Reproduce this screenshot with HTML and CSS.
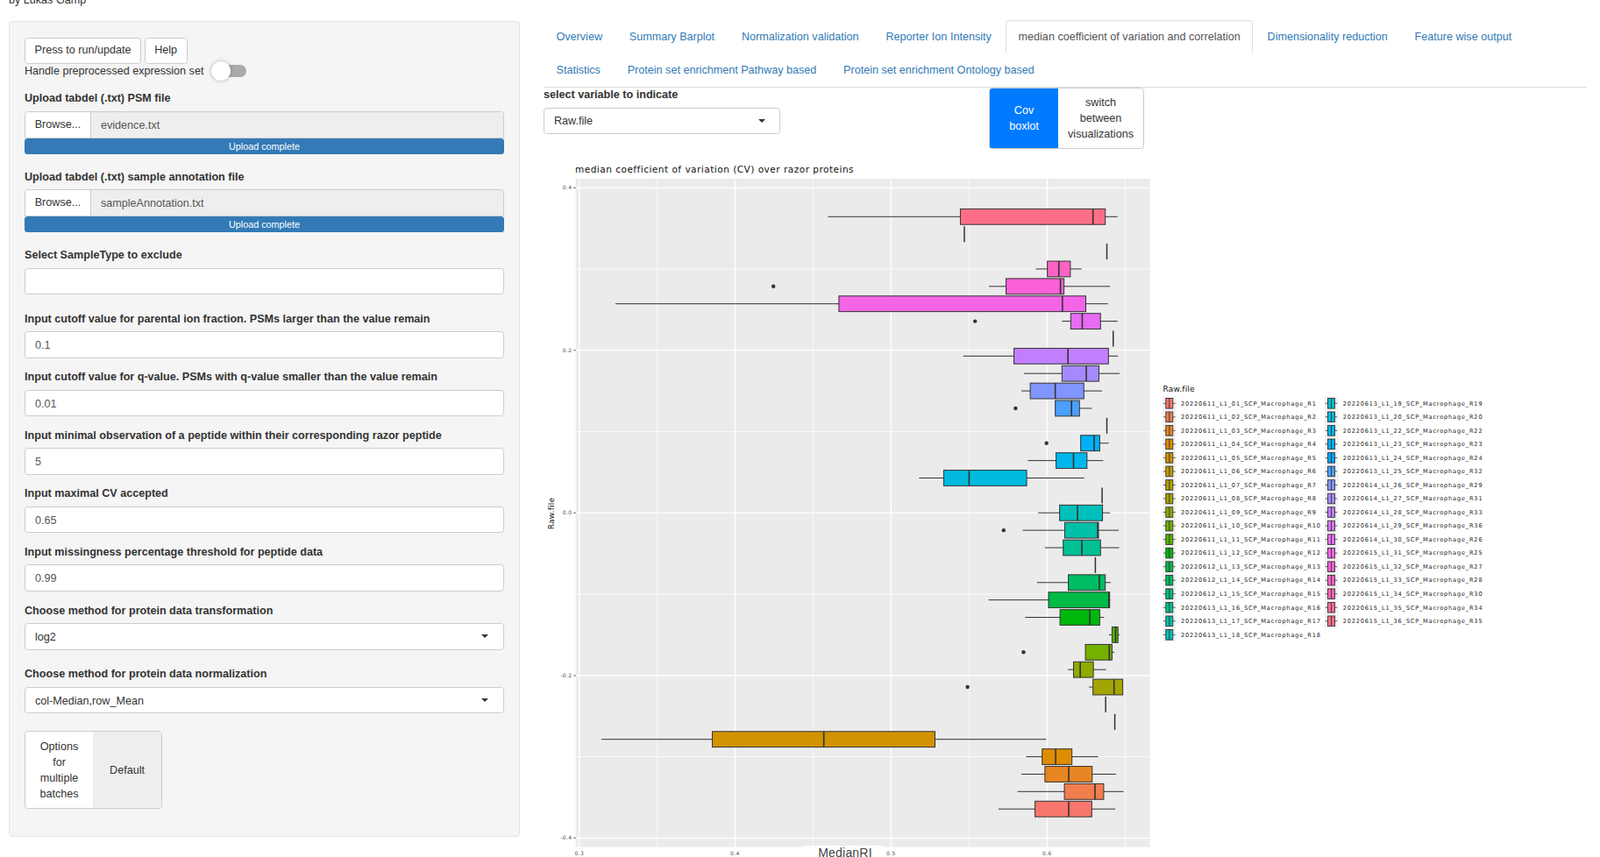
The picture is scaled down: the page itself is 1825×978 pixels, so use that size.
FILE: index.html
```html
<!DOCTYPE html>
<html lang="en">
<head>
    <meta charset="UTF-8">
    <meta name="viewport" content="width=device-width, initial-scale=1.0">
    <title>Proteomics QC</title>
    <link rel="stylesheet" href="styles.css">
</head>
<body>
    <div class="byline">by Lukas Gamp</div>
    <div class="layout">
        <aside class="well">
            <div class="btn-row">
                <button class="btn">Press to run/update</button>
                <button class="btn">Help</button>
            </div>
            <div class="switch-row">
                <span>Handle preprocessed expression set</span>
                <span class="switch"><span class="switch-knob"></span></span>
            </div>

            <div class="upload">
                <label>Upload tabdel (.txt) PSM file</label>
                <div class="file-input">
                    <span class="file-btn">Browse...</span>
                    <span class="file-name">evidence.txt</span>
                </div>
                <div class="progress">Upload complete</div>
            </div>
            <div class="upload">
                <label>Upload tabdel (.txt) sample annotation file</label>
                <div class="file-input">
                    <span class="file-btn">Browse...</span>
                    <span class="file-name">sampleAnnotation.txt</span>
                </div>
                <div class="progress">Upload complete</div>
            </div>

            <div class="form-group form-group-select">
                <label>Select SampleType to exclude</label>
                <div class="field"></div>
            </div>
            <div class="form-group">
                <label>Input cutoff value for parental ion fraction. PSMs larger than the value remain</label>
                <div class="field">0.1</div>
            </div>
            <div class="form-group">
                <label>Input cutoff value for q-value. PSMs with q-value smaller than the value remain</label>
                <div class="field">0.01</div>
            </div>
            <div class="form-group">
                <label>Input minimal observation of a peptide within their corresponding razor peptide</label>
                <div class="field">5</div>
            </div>
            <div class="form-group">
                <label>Input maximal CV accepted</label>
                <div class="field">0.65</div>
            </div>
            <div class="form-group">
                <label>Input missingness percentage threshold for peptide data</label>
                <div class="field">0.99</div>
            </div>
            <div class="form-group form-group-select">
                <label>Choose method for protein data transformation</label>
                <div class="field field-select"><span>log2</span><i class="caret"></i></div>
            </div>
            <div class="form-group form-group-select">
                <label>Choose method for protein data normalization</label>
                <div class="field field-select"><span>col-Median,row_Mean</span><i class="caret"></i></div>
            </div>

            <div class="toggle toggle-batches">
                <div class="toggle-cell toggle-narrow">Options for multiple batches</div>
                <div class="toggle-cell toggle-muted">Default</div>
            </div>
        </aside>

        <main class="main">
            <ul class="tabs">
                <li><a>Overview</a></li>
                <li><a>Summary Barplot</a></li>
                <li><a>Normalization validation</a></li>
                <li><a>Reporter Ion Intensity</a></li>
                <li class="active"><a>median coefficient of variation and correlation</a></li>
                <li><a>Dimensionality reduction</a></li>
                <li><a>Feature wise output</a></li>
                <li><a>Statistics</a></li>
                <li><a>Protein set enrichment Pathway based</a></li>
                <li><a>Protein set enrichment Ontology based</a></li>
            </ul>
            <div class="controls">
                <div class="variable">
                    <label>select variable to indicate</label>
                    <div class="field field-select field-dark"><span>Raw.file</span><i class="caret"></i></div>
                </div>
                <div class="toggle toggle-plot">
                    <div class="toggle-cell toggle-narrow toggle-on">Cov boxlot</div>
                    <div class="toggle-cell">switch between visualizations</div>
                </div>
            </div>
            <svg id="plot" class="plot" viewBox="620 180 1100 810" width="1100" height="810"></svg>
        </main>
    </div>
    <script src="plot.js"></script>
</body>
</html>
```

FILE: styles.css
```css
html, body {
    height: 100%;
    overflow: hidden;
}
body {
    font-family: "Liberation Sans", Arial, sans-serif;
    font-size: 12.6px;
    line-height: 18px;
    color: #333;
    background: white;
    margin: 0;
}
label {
    display: block;
    font-weight: bold;
    line-height: 17px;
    margin-bottom: 5.5px;
}
.byline {
    margin: -9px 0 0 10px;
    height: 33px;
}
.layout {
    display: flex;
    align-items: flex-start;
    padding: 0 15px 0 10px;
}
.well {
    box-sizing: border-box;
    width: 583px;
    flex: none;
    margin-right: 27px;
    padding: 18px 17px 17px;
    background-color: #f5f5f5;
    border: 1px solid #e3e3e3;
    border-radius: 3.6px;
    height: 931px;
}
.btn-row {
    display: flex;
    gap: 3.5px;
}
.btn {
    font: inherit;
    color: #333;
    background: white;
    border: 1px solid #ccc;
    border-radius: 3.6px;
    padding: 3.6px 10.6px 5.2px;
    height: 30px;
    line-height: 18px;
}
.switch-row {
    display: flex;
    align-items: center;
    height: 18px;
    margin: -1px 0 14px;
}
.switch {
    position: relative;
    width: 37px;
    height: 14px;
    margin-left: 12px;
    background: #aaa;
    border-radius: 7px;
}
.switch-knob {
    position: absolute;
    left: -3px;
    top: -4px;
    width: 22px;
    height: 22px;
    background: white;
    border-radius: 50%;
    box-shadow: 0 0 4px rgba(0, 0, 0, 0.3);
}
.upload {
    margin-bottom: 18px;
}
.file-input {
    box-sizing: border-box;
    display: flex;
    height: 31px;
    border: 1px solid #ccc;
    border-radius: 3.6px 3.6px 0 0;
    overflow: hidden;
}
.file-btn {
    width: 75px;
    flex: none;
    box-sizing: border-box;
    padding: 5px 0 0 10.7px;
    background: white;
    border-right: 1px solid #ccc;
}
.file-name {
    flex: 1;
    padding: 6px 11px;
    background: #eee;
    color: #555;
}
.progress {
    height: 18px;
    background-color: #337ab7;
    color: white;
    font-size: 10.8px;
    line-height: 18px;
    text-align: center;
    border-radius: 3.6px;
}
.form-group {
    margin-bottom: 13.5px;
}
.form-group-select {
    margin-bottom: 19.5px;
}
.field {
    box-sizing: border-box;
    height: 30.6px;
    padding: 6px 11px;
    background: white;
    border: 1px solid #ccc;
    border-radius: 3.6px;
    color: #555;
}
.field-select {
    display: flex;
    align-items: center;
    justify-content: space-between;
    color: #333;
    padding: 5.4px 17px 5.4px 11px;
}
.form-group .field-select span {
    padding-top: 2px;
}
.field-dark {
    padding-right: 16px;
}
.caret {
    width: 0;
    height: 0;
    border-style: solid;
    border-width: 4.5px 4.5px 0;
    border-color: #333 transparent transparent;
}
.toggle {
    box-sizing: border-box;
    display: grid;
    border: 1px solid #ccc;
    border-radius: 3.6px;
    overflow: hidden;
    text-align: center;
    background: white;
}
.toggle-batches {
    grid-template-columns: 77px 78px;
    width: 157px;
    height: 89px;
}
.toggle-batches .toggle-cell {
    padding-top: 2px;
}
.toggle-plot {
    grid-template-columns: 78px 97px;
    width: 177px;
    height: 70px;
}
.toggle-cell {
    display: flex;
    align-items: center;
    justify-content: center;
    padding: 0 8px;
}
.toggle-narrow {
    padding: 0 14px;
}
.toggle-muted {
    background: #eee;
    color: #333;
}
.toggle-on {
    background: #007bff;
    color: white;
}
.main {
    flex: 1;
    min-width: 0;
    margin-top: -1px;
}
.tabs {
    display: flex;
    flex-wrap: wrap;
    list-style: none;
    margin: 0;
    padding: 0;
    border-bottom: 1px solid #ddd;
}
.tabs li {
    margin-right: 1.8px;
}
.tabs a {
    display: block;
    height: 37.8px;
    box-sizing: border-box;
    padding: 9px 13.5px;
    border: 1px solid transparent;
    color: #337ab7;
}
.tabs .active a {
    color: #555;
    background: white;
    border-color: #ddd #ddd transparent;
    border-radius: 3.6px 3.6px 0 0;
}
.controls {
    display: flex;
    align-items: flex-start;
    margin-top: 0.5px;
}
.variable {
    width: 270px;
    margin-right: 238px;
}
.plot {
    display: block;
    margin-top: 10px;
}
.plot text {
    font-family: "DejaVu Sans", sans-serif;
}
.plot .plot-title {
    font-size: 10.5px;
    letter-spacing: 0.5px;
    fill: #111;
}
.plot .tick {
    font-size: 6px;
    letter-spacing: 0.4px;
    fill: #4d4d4d;
}
.plot .axis-title {
    font-size: 9px;
    letter-spacing: 0.2px;
    fill: #111;
}
.plot .legend-label {
    font-size: 6.6px;
    letter-spacing: 0.82px;
    fill: #222;
}
.plot .x-title {
    font-family: "Liberation Sans", sans-serif;
    font-size: 14px;
    letter-spacing: 0.2px;
    fill: #444;
}
```

FILE: plot.js
```javascript
// coordinates below were read off a 1568 wide grid, px() brings them to the page
const px = z => 620 + z / 2.2085;
const SVG_NS = "http://www.w3.org/2000/svg";
const plot = document.getElementById("plot");

const panel = { left: 656.7, right: 1311.6, top: 204, bottom: 966.7 };
const majorY = [[214.3, "0.4"], [399.7, "0.2"], [585.3, "0.0"], [771, "-0.2"], [956.3, "-0.4"]];
const minorY = [307, 492.5, 678, 863.5];
const majorX = [[660.8, "0.3"], [838.3, "0.4"], [1016.3, "0.5"], [1194.3, "0.6"]];
const minorX = [749.5, 927.3, 1105.3, 1283.3];

// top row first: [whisker low, q1, median, q3, whisker high, outlier]
// a row with one number is a single sample, only the median tick is drawn
const rows = [
    [717, 1050, 1384, 1415, 1446],
    [1060],
    [1419],
    [1240, 1269, 1298, 1327, 1355],
    [1122, 1165, 1302, 1311, 1427, 579],
    [181, 744, 1307, 1366, 1422],
    [1306, 1328, 1357, 1403, 1446, 1087],
    [1435],
    [1057, 1185, 1321, 1423, 1447],
    [1210, 1306, 1367, 1399, 1451],
    [1204, 1226, 1289, 1361, 1407],
    [1289, 1289, 1330, 1350, 1381, 1189],
    [1419],
    [1353, 1353, 1387, 1401, 1424, 1267],
    [1220, 1291, 1335, 1369, 1410],
    [946, 1008, 1072, 1217, 1362],
    [1407],
    [1246, 1300, 1345, 1408, 1427],
    [1207, 1313, 1396, 1398, 1449, 1159],
    [1263, 1309, 1356, 1403, 1450],
    [1390],
    [1243, 1322, 1400, 1415, 1429],
    [1121, 1272, 1424, 1426, 1428],
    [1213, 1301, 1376, 1401, 1412],
    [1424, 1432, 1441, 1447, 1451],
    [1365, 1365, 1425, 1432, 1438, 1209],
    [1321, 1335, 1352, 1385, 1417],
    [1374, 1384, 1437, 1459, 1459, 1068],
    [1416],
    [1439],
    [146, 425, 706, 986, 1266],
    [1216, 1256, 1290, 1331, 1397],
    [1204, 1263, 1323, 1382, 1442],
    [1194, 1312, 1389, 1411, 1461],
    [1146, 1238, 1323, 1381, 1440]
];

const legend = [
    ["20220611_L1_01", "R1"], ["20220611_L1_02", "R2"], ["20220611_L1_03", "R3"],
    ["20220611_L1_04", "R4"], ["20220611_L1_05", "R5"], ["20220611_L1_06", "R6"],
    ["20220611_L1_07", "R7"], ["20220611_L1_08", "R8"], ["20220611_L1_09", "R9"],
    ["20220611_L1_10", "R10"], ["20220611_L1_11", "R11"], ["20220611_L1_12", "R12"],
    ["20220612_L1_13", "R13"], ["20220612_L1_14", "R14"], ["20220612_L1_15", "R15"],
    ["20220613_L1_16", "R16"], ["20220613_L1_17", "R17"], ["20220613_L1_18", "R18"],
    ["20220613_L1_19", "R19"], ["20220613_L1_20", "R20"], ["20220613_L1_22", "R22"],
    ["20220613_L1_23", "R23"], ["20220613_L1_24", "R24"], ["20220613_L1_25", "R32"],
    ["20220614_L1_26", "R29"], ["20220614_L1_27", "R31"], ["20220614_L1_28", "R33"],
    ["20220614_L1_29", "R36"], ["20220614_L1_30", "R26"], ["20220615_L1_31", "R25"],
    ["20220615_L1_32", "R27"], ["20220615_L1_33", "R28"], ["20220615_L1_34", "R30"],
    ["20220615_L1_35", "R34"], ["20220615_L1_36", "R35"]
];

function add(tag, attrs, text) {
    let el = document.createElementNS(SVG_NS, tag);
    for (let key in attrs) el.setAttribute(key, attrs[key]);
    if (text) el.textContent = text;
    plot.appendChild(el);
    return el;
}

function line(x1, y1, x2, y2, stroke, width) {
    add("line", { x1, y1, x2, y2, stroke, "stroke-width": width });
}

// ggplot's default hue palette, hcl(h, c = 100, l = 65)
function hue(i) {
    let h = (15 + 360 * i / rows.length) * Math.PI / 180;
    let L = 65, u = 100 * Math.cos(h), v = 100 * Math.sin(h);
    let Y = Math.pow((L + 16) / 116, 3);
    let up = u / (13 * L) + 0.19783, vp = v / (13 * L) + 0.46832;
    let X = 9 * Y * up / (4 * vp);
    let Z = -X / 3 - 5 * Y + 3 * Y / vp;
    let rgb = [
        3.2406 * X - 1.5372 * Y - 0.4986 * Z,
        -0.9689 * X + 1.8758 * Y + 0.0415 * Z,
        0.0557 * X - 0.204 * Y + 1.057 * Z
    ].map(c => {
        c = Math.min(1, Math.max(0, c));
        c = c <= 0.0031308 ? 12.92 * c : 1.055 * Math.pow(c, 1 / 2.4) - 0.055;
        return Math.round(c * 255);
    });
    return `rgb(${rgb.join(",")})`;
}

function drawPanel() {
    add("text", { x: 656, y: 196.5, class: "plot-title" }, "median coefficient of variation (CV) over razor proteins");
    add("rect", { x: panel.left, y: panel.top, width: panel.right - panel.left, height: panel.bottom - panel.top, fill: "#ebebeb" });
    minorY.forEach(y => line(panel.left, y, panel.right, y, "white", 0.7));
    minorX.forEach(x => line(x, panel.top, x, panel.bottom, "white", 0.7));
    majorY.forEach(([y, label]) => {
        line(654.5, y, panel.left, y, "#333", 1);
        line(panel.left, y, panel.right, y, "white", 1.3);
        add("text", { x: 652.5, y: y + 2, class: "tick", "text-anchor": "end" }, label);
    });
    majorX.forEach(([x, label]) => {
        line(x, panel.top, x, panel.bottom, "white", 1.3);
        add("text", { x, y: 976, class: "tick", "text-anchor": "middle" }, label);
    });
}

function drawBoxes() {
    rows.forEach((row, i) => {
        let y = 247.3 + i * 19.88;
        let color = hue(rows.length - 1 - i);
        if (row.length === 1) {
            line(px(row[0]), y - 9, px(row[0]), y + 9, "#333", 1.5);
            return;
        }
        let [low, q1, median, q3, high, outlier] = row.map(px);
        line(low, y, high, y, "#333", 1);
        add("rect", { x: q1, y: y - 8.9, width: q3 - q1, height: 17.8, fill: color, stroke: "#333", "stroke-width": 1 });
        line(median, y - 8.9, median, y + 8.9, "#333", 1.6);
        if (outlier) add("circle", { cx: outlier, cy: y, r: 2.2, fill: "#333" });
    });
}

function drawLegend() {
    add("text", { x: 1326.5, y: 447, class: "axis-title" }, "Raw.file");
    legend.forEach(([run, rep], i) => {
        let col = i < 18 ? 0 : 1;
        let y = 460.3 + (col ? i - 18 : i) * 15.53;
        let x = col ? 1510.7 : 1326;
        add("rect", { x, y: y - 7.8, width: 15.6, height: 15.6, fill: "#f2f2f2" });
        line(x + 1, y, x + 14.6, y, "#333", 0.8);
        add("rect", { x: x + 3.8, y: y - 5.8, width: 8, height: 11.6, fill: hue(i), stroke: "#333", "stroke-width": 0.9 });
        line(x + 7.8, y - 5.8, x + 7.8, y + 5.8, "#333", 0.9);
        add("text", { x: x + 21, y: y + 2.3, class: "legend-label" }, `${run}_SCP_Macrophage_${rep}`);
    });
}

function drawAxisTitles() {
    add("text", { x: 631.5, y: 586, class: "axis-title", "text-anchor": "middle", transform: "rotate(-90 631.5 586)" }, "Raw.file");
    add("rect", { x: 916, y: 965, width: 92, height: 20, fill: "white" });
    add("text", { x: 964, y: 978, class: "x-title", "text-anchor": "middle" }, "MedianRI");
}

drawPanel();
drawBoxes();
drawLegend();
drawAxisTitles();
```
